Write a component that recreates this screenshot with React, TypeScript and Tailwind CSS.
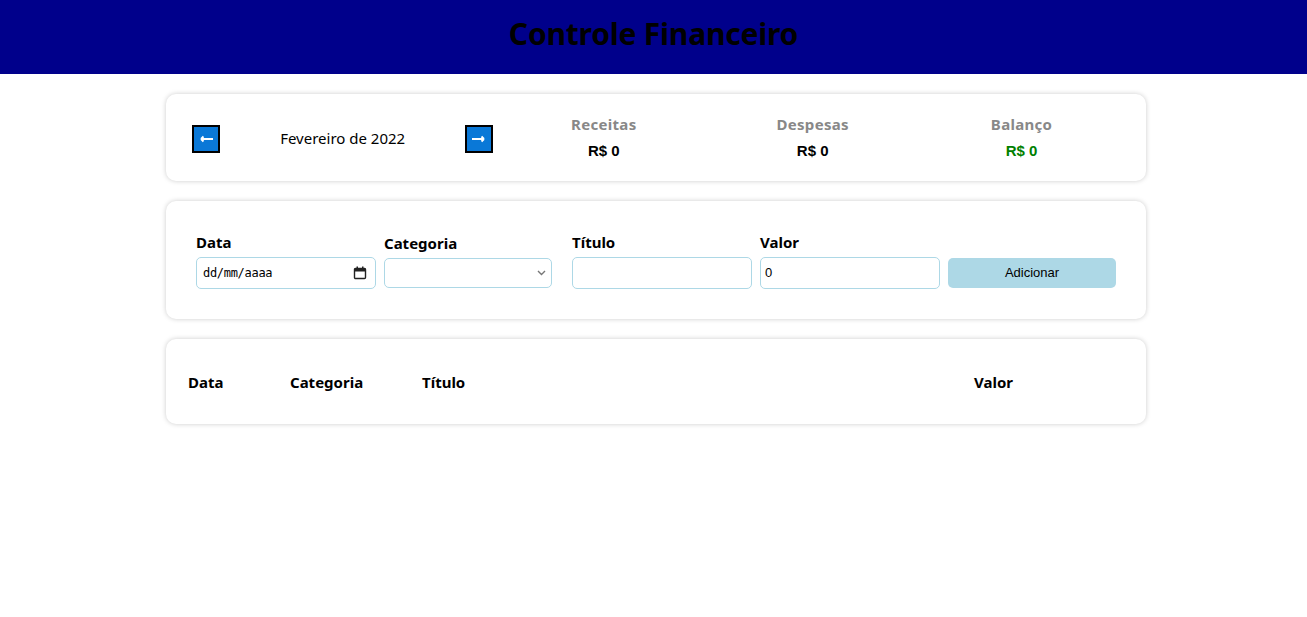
import { useState } from "react";

const FONT = "font-['Noto_Sans','Open_Sans',sans-serif]";

function InfoItem({ title, value, color }: { title: string; value: string; color?: string }) {
  return (
    <div className="flex flex-1 flex-col items-center">
      <div className={`${FONT} text-[15px] font-bold leading-5 tracking-[0.3px] text-[#888]`}>{title}</div>
      <div className={`mt-[7px] font-['Liberation_Sans',Arial,sans-serif] text-[15px] font-bold leading-5 ${color ?? "text-black"}`}>
        {value}
      </div>
    </div>
  );
}

function ArrowButton({ dir, onClick }: { dir: "left" | "right"; onClick: () => void }) {
  return (
    <button
      type="button"
      onClick={onClick}
      className="mx-[6px] mt-[2px] flex h-[28px] w-[28px] items-center justify-center border-2 border-black bg-[#0a78d7]"
    >
      <svg width="16" height="8" viewBox="0 0 16 8">
        {dir === "left" ? (
          <path d="M15 4H3M3 4L5.5 1.5M3 4L5.5 6.5" stroke="white" strokeWidth="1.8" fill="none" />
        ) : (
          <path d="M1 4H13M13 4L10.5 1.5M13 4L10.5 6.5" stroke="white" strokeWidth="1.8" fill="none" />
        )}
      </svg>
    </button>
  );
}

const MONTHS = ["Janeiro", "Fevereiro", "Março", "Abril", "Maio", "Junho", "Julho", "Agosto", "Setembro", "Outubro", "Novembro", "Dezembro"];

export default function App() {
  const [month, setMonth] = useState(1);
  const [year, setYear] = useState(2022);
  const [valor, setValor] = useState("0");

  const prev = () => {
    if (month === 0) {
      setMonth(11);
      setYear(year - 1);
    } else setMonth(month - 1);
  };
  const next = () => {
    if (month === 11) {
      setMonth(0);
      setYear(year + 1);
    } else setMonth(month + 1);
  };

  return (
    <div className="min-h-screen bg-white">
      <header className="flex h-[74px] items-center justify-center bg-[#00008b] pb-[6px]">
        <h1 className={`${FONT} text-[30px] font-bold leading-none tracking-[-0.2px] text-black`}>Controle Financeiro</h1>
      </header>

      <main className="mx-auto flex w-[985px] flex-col gap-5 pl-[5px] pt-5">
        {/* resumo do mês */}
        <section className="flex h-[87px] items-center rounded-[10px] bg-white px-5 shadow-[0_0_5px_#ccc]">
          <div className="flex flex-1 items-center justify-between">
            <ArrowButton dir="left" onClick={prev} />
            <span className={`${FONT} mt-[2px] text-[15px] text-black`}>
              {MONTHS[month]} de {year}
            </span>
            <ArrowButton dir="right" onClick={next} />
          </div>
          <div className="flex flex-[2] items-center">
            <InfoItem title="Receitas" value="R$ 0" />
            <InfoItem title="Despesas" value="R$ 0" />
            <InfoItem title="Balanço" value="R$ 0" color="text-[#008000]" />
          </div>
        </section>

        {/* formulário */}
        <section className="flex h-[118px] items-center rounded-[10px] bg-white pl-[30px] shadow-[0_0_5px_#ccc]">
          <label className="w-[188px]">
            <div className={`${FONT} text-[15px] font-bold leading-5 text-black`}>Data</div>
            <div className="mt-[5px] flex h-[32px] w-[180px] items-center justify-between rounded-[5px] border border-[#add8e6] pl-[6px] pr-[8px]">
              <span className="font-['DejaVu_Sans_Mono',monospace] text-[12px] tracking-[-0.3px] text-black">dd/mm/aaaa</span>
              <svg width="14" height="14" viewBox="0 0 14 14">
                <rect x="1.5" y="2.5" width="11" height="10" rx="1" fill="none" stroke="#222" strokeWidth="1.4" />
                <rect x="1.5" y="2.5" width="11" height="3" fill="#222" />
                <rect x="3.5" y="0.5" width="1.5" height="3" fill="#222" />
                <rect x="9" y="0.5" width="1.5" height="3" fill="#222" />
              </svg>
            </div>
          </label>
          <label className="w-[188px]">
            <div className={`${FONT} text-[15px] font-bold leading-5 text-black`}>Categoria</div>
            <div className="relative mt-[5px] w-[168px]">
              <select className="block h-[30px] w-[168px] appearance-none rounded-[5px] border border-[#add8e6] bg-white px-2 text-[13px]" />
              <svg className="pointer-events-none absolute right-[6px] top-[12px]" width="9" height="6" viewBox="0 0 9 6">
                <path d="M1 1L4.5 4.5L8 1" stroke="#777" strokeWidth="1.4" fill="none" />
              </svg>
            </div>
          </label>
          <label className="w-[188px]">
            <div className={`${FONT} text-[15px] font-bold leading-5 text-black`}>Título</div>
            <input type="text" className="mt-[5px] block h-[32px] w-[180px] rounded-[5px] border border-[#add8e6] px-[5px] text-[13px] outline-none" />
          </label>
          <label className="w-[188px]">
            <div className={`${FONT} text-[15px] font-bold leading-5 text-black`}>Valor</div>
            <input
              type="text"
              value={valor}
              onChange={(e) => setValor(e.target.value)}
              className="mt-[5px] block h-[32px] w-[180px] rounded-[5px] border border-[#add8e6] px-[4px] font-['Liberation_Sans',Arial,sans-serif] text-[13px] text-black outline-none"
            />
          </label>
          <button
            type="button"
            className="mt-[26px] h-[30px] w-[168px] rounded-[5px] bg-[#add8e6] font-['Liberation_Sans',Arial,sans-serif] text-[13px] text-black"
          >
            Adicionar
          </button>
        </section>

        {/* tabela */}
        <section className="flex h-[85px] items-center rounded-[10px] bg-white px-5 pt-[2px] shadow-[0_0_5px_#ccc]">
          <table className="w-full">
            <thead>
              <tr className={`${FONT} text-left text-[15px] font-bold text-black`}>
                <th className="w-[104px] py-[10px] pl-[2px]">Data</th>
                <th className="w-[132px] py-[10px]">Categoria</th>
                <th className="w-[552px] py-[10px]">Título</th>
                <th className="py-[10px]">Valor</th>
              </tr>
            </thead>
            <tbody />
          </table>
        </section>
      </main>
    </div>
  );
}
